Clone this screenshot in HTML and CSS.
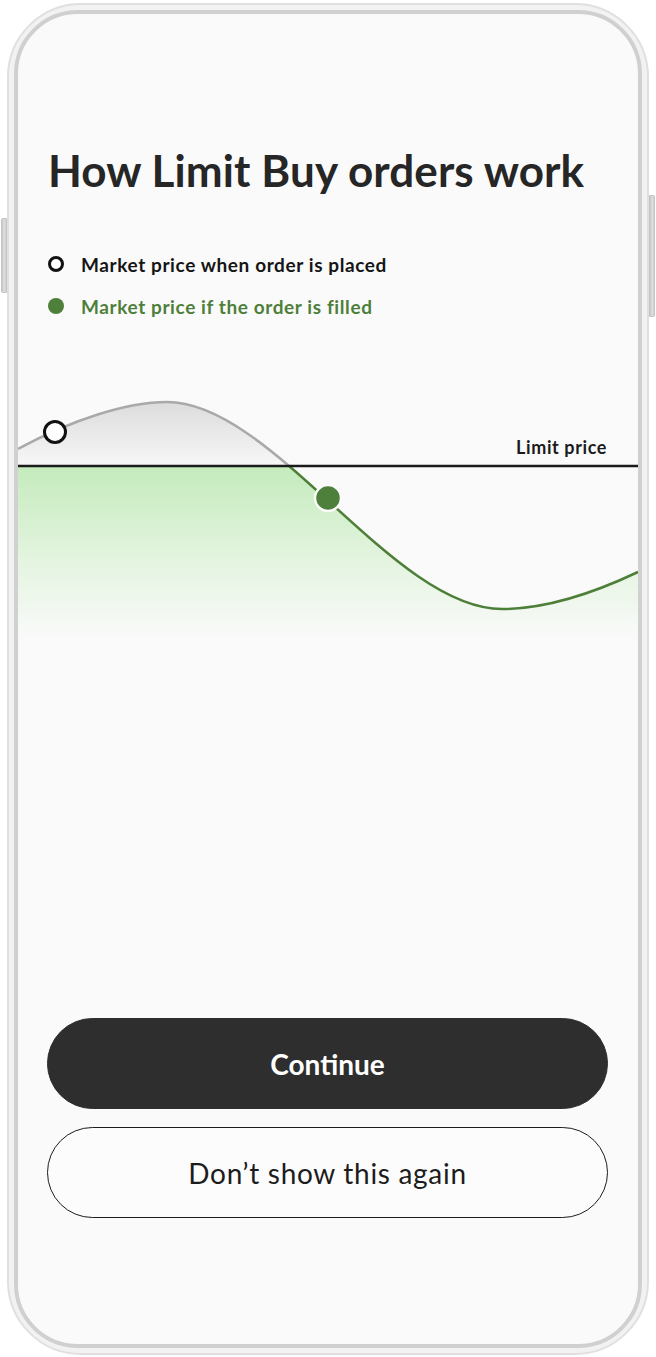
FILE: index.html
```html
<!DOCTYPE html>
<html lang="en">

<head>
	<meta charset="UTF-8">
	<meta name="viewport" content="width=device-width, initial-scale=1.0">
	<link rel="stylesheet" href="styles.css">
	<title>How Limit Buy orders work</title>
</head>

<body>
	<div class="rail rail-left">
		<div class="side-button side-button-left"></div>
	</div>

	<div class="phone">
		<div class="screen">
			<div class="intro">
				<h1>How Limit Buy orders work</h1>
				<ul class="legend">
					<li class="legend-item">
						<span class="dot dot-open"></span>
						Market price when order is placed
					</li>
					<li class="legend-item legend-filled">
						<span class="dot dot-filled"></span>
						Market price if the order is filled
					</li>
				</ul>
			</div>

			<svg class="chart" width="620" height="260" viewBox="0 0 620 260">
				<defs>
					<clipPath id="above">
						<rect x="0" y="0" width="620" height="87"></rect>
					</clipPath>
					<clipPath id="below">
						<rect x="0" y="87" width="620" height="173"></rect>
					</clipPath>
					<linearGradient id="grayFill" x1="0" y1="23" x2="0" y2="87" gradientUnits="userSpaceOnUse">
						<stop offset="0" stop-color="#dcdcdc"></stop>
						<stop offset="1" stop-color="#f7f7f7"></stop>
					</linearGradient>
					<linearGradient id="greenFill" x1="0" y1="87" x2="0" y2="260" gradientUnits="userSpaceOnUse">
						<stop offset="0" stop-color="#c4ebbc"></stop>
						<stop offset="0.55" stop-color="#e4f4e0"></stop>
						<stop offset="1" stop-color="#fafafa"></stop>
					</linearGradient>
				</defs>

				<!-- shading above and below the limit line -->
				<path clip-path="url(#above)" fill="url(#grayFill)"
					d="M0,70 C55,40 110,23 149,23 C255,23 375,230 484,230 C530,230 580,212 620,193 L620,87 L0,87 Z"></path>
				<path clip-path="url(#below)" fill="url(#greenFill)"
					d="M0,70 C55,40 110,23 149,23 C255,23 375,230 484,230 C530,230 580,212 620,193 L620,260 L0,260 Z"></path>

				<!-- price curve -->
				<path clip-path="url(#above)" fill="none" stroke="#a9a9a9" stroke-width="2.5"
					d="M0,70 C55,40 110,23 149,23 C255,23 375,230 484,230 C530,230 580,212 620,193"></path>
				<path clip-path="url(#below)" fill="none" stroke="#4e7f38" stroke-width="2.5"
					d="M0,70 C55,40 110,23 149,23 C255,23 375,230 484,230 C530,230 580,212 620,193"></path>

				<line x1="0" y1="87" x2="620" y2="87" stroke="#1b1b1b" stroke-width="2.5"></line>
				<text class="chart-label" x="589" y="75" text-anchor="end">Limit price</text>

				<circle cx="37" cy="53" r="10.5" fill="#ffffff" stroke="#111111" stroke-width="3"></circle>
				<circle cx="310" cy="119" r="13" fill="#4e7f3b" stroke="#fafafa" stroke-width="2.5"></circle>
			</svg>

			<div class="actions">
				<button class="btn btn-primary">Continue</button>
				<button class="btn btn-outline">Don&rsquo;t show this again</button>
			</div>
		</div>
	</div>

	<div class="rail rail-right">
		<div class="side-button side-button-right"></div>
	</div>
</body>

</html>
```

FILE: styles.css
```css
body {
	display: flex;
	margin: 0;
	padding-top: 3px;
	background-color: #ffffff;
	font-family: "Lato", "Open Sans", sans-serif;
	color: #1e1e1e;
}

.rail {
	width: 7px;
	flex-shrink: 0;
}

.side-button {
	width: 6px;
	background: linear-gradient(to right, #c9c9c9, #dedede 60%, #cfcfcf);
	border: 1px solid #c4c4c4;
	box-sizing: border-box;
}

.side-button-left {
	margin-top: 215px;
	margin-left: 1px;
	height: 75px;
	border-radius: 2px 0 0 2px;
}

.side-button-right {
	margin-top: 192px;
	height: 122px;
	border-radius: 0 2px 2px 0;
}

.phone {
	width: 642px;
	height: 1352px;
	box-sizing: border-box;
	padding: 5px;
	border: 2px solid #e0e0e0;
	border-radius: 74px;
	background-color: #f2f2f2;
	flex-shrink: 0;
}

.screen {
	display: flex;
	flex-direction: column;
	height: 100%;
	box-sizing: border-box;
	border: 4px solid #d0d0d0;
	border-radius: 64px;
	background-color: #fafafa;
	overflow: hidden;
}

.intro {
	padding: 0 30px;
}

h1 {
	margin: 130px 0 0;
	font-size: 44px;
	line-height: 53px;
	font-weight: 700;
	color: #262626;
	letter-spacing: 0.1px;
}

.legend {
	list-style: none;
	margin: 55px 0 0;
	padding: 0;
}

.legend-item {
	display: flex;
	align-items: center;
	gap: 17px;
	height: 24px;
	font-size: 19px;
	font-weight: 700;
	letter-spacing: 0.6px;
	color: #151515;
}

.legend-item + .legend-item {
	margin-top: 18px;
}

.legend-filled {
	color: #4e7f3a;
}

.dot {
	width: 16px;
	height: 16px;
	border-radius: 50%;
	box-sizing: border-box;
	flex-shrink: 0;
}

.dot-open {
	border: 3px solid #111111;
	background-color: #ffffff;
}

.dot-filled {
	background-color: #4e7f3b;
}

.chart {
	display: block;
	margin-top: 61px;
}

.chart-label {
	font-family: "Lato", sans-serif;
	font-size: 18px;
	font-weight: 700;
	letter-spacing: 0.6px;
	fill: #1b1b1b;
}

.actions {
	display: flex;
	flex-direction: column;
	gap: 18px;
	margin-top: auto;
	padding: 0 30px 126px 29px;
}

.btn {
	height: 91px;
	border-radius: 46px;
	font-family: "Lato", sans-serif;
	font-size: 28px;
	cursor: pointer;
}

.btn-primary {
	background-color: #2f2e2e;
	color: #ffffff;
	border: 1px solid #2f2e2e;
	font-weight: 700;
}

.btn-outline {
	background-color: #fcfcfc;
	color: #1c1c1c;
	border: 1px solid #1c1c1c;
	font-weight: 400;
	letter-spacing: 0.7px;
}
```
